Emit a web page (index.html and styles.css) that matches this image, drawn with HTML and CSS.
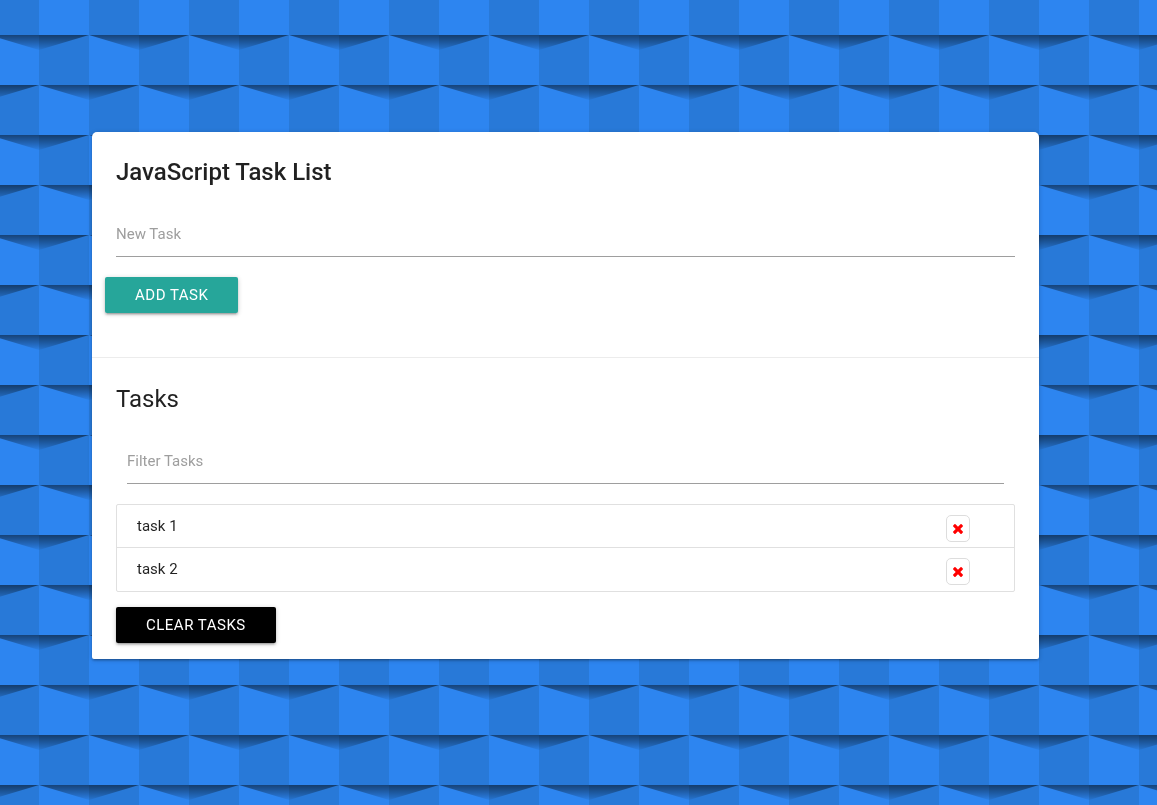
FILE: index.html
```html
<!DOCTYPE html>
<html lang="en">
<head>
<meta charset="utf-8">
<meta name="viewport" content="width=device-width, initial-scale=1">
<title>Task List</title>
<link rel="stylesheet" href="styles.css">
</head>
<body>
<svg class="backdrop" aria-hidden="true">
  <defs>
    <linearGradient id="shade" gradientUnits="userSpaceOnUse" x1="0" y1="0" x2="0" y2="15">
      <stop offset="0" stop-color="#000" stop-opacity=".5"/>
      <stop offset="1" stop-color="#000" stop-opacity="0.04"/>
    </linearGradient>
    <pattern id="blocks" x="-11" y="35" width="100" height="100" patternUnits="userSpaceOnUse">
      <rect width="100" height="100" fill="#2d85f0"/>
      <path d="M50 0H100V50H50ZM0 50H50V100H0Z" fill="#2879d8"/>
      <path d="M0 0H100L50 15Z" fill="url(#shade)"/>
      <g transform="translate(0 50)">
        <path d="M-50 0H50L0 15ZM50 0H150L100 15Z" fill="url(#shade)"/>
      </g>
    </pattern>
  </defs>
  <rect width="100%" height="100%" fill="url(#blocks)"/>
</svg>
<svg class="symbols" aria-hidden="true">
  <symbol id="times" viewBox="302 366 1188 1188">
    <path d="M1490 1322q0 40-28 68l-136 136q-28 28-68 28t-68-28l-294-294-294 294q-28 28-68 28t-68-28l-136-136q-28-28-28-68t28-68l294-294-294-294q-28-28-28-68t28-68l136-136q28-28 68-28t68 28l294 294 294-294q28-28 68-28t68 28l136 136q28 28 28 68t-28 68l-294 294 294 294q28 28 28 68z"/>
  </symbol>
</svg>
<main class="container">
  <div class="card">
    <section class="card-content">
      <h1 class="card-title card-title-main">JavaScript Task List</h1>
      <form class="task-form">
        <input class="field" type="text" id="task" placeholder="New Task" aria-label="New Task">
        <button class="btn btn-add" type="submit">ADD TASK</button>
      </form>
    </section>
    <section class="card-action">
      <h2 class="card-title">Tasks</h2>
      <div class="filter">
        <input class="field" type="text" id="filter" placeholder="Filter Tasks" aria-label="Filter Tasks">
      </div>
      <ul class="collection">
        <li class="collection-item">
          <span>task 1</span>
          <button class="delete-item" type="button" aria-label="Delete task 1"><svg class="icon"><use href="#times"/></svg></button>
        </li>
        <li class="collection-item">
          <span>task 2</span>
          <button class="delete-item" type="button" aria-label="Delete task 2"><svg class="icon"><use href="#times"/></svg></button>
        </li>
      </ul>
      <button class="btn btn-clear" type="button">CLEAR TASKS</button>
    </section>
  </div>
</main>
</body>
</html>
```
FILE: styles.css
```css
* {
  box-sizing: border-box;
}

body {
  margin: 0;
  background: #2879d8;
  color: rgba(0, 0, 0, 0.87);
  font: 15px/22px Roboto, sans-serif;
}

.backdrop {
  position: fixed;
  inset: 0;
  z-index: -1;
  width: 100%;
  height: 100%;
}

.symbols {
  position: absolute;
  width: 0;
  height: 0;
}

.container {
  padding: 132px 118px 24px 92px;
}

.card {
  background: #fff;
  border-radius: 5px 5px 2px 2px;
  box-shadow: 0 2px 2px 0 rgba(0, 0, 0, 0.14), 0 3px 1px -2px rgba(0, 0, 0, 0.12), 0 1px 5px 0 rgba(0, 0, 0, 0.2);
}

.card-content {
  padding: 24px 24px 44px;
}

.card-action {
  padding: 25px 24px 16px;
  border-top: 1px solid rgba(160, 160, 160, 0.2);
}

.card-title {
  margin: 0 0 24px;
  font-size: 24px;
  font-weight: 400;
  line-height: 32px;
}

.card-title-main {
  font-weight: 500;
}

.field {
  display: block;
  width: 100%;
  height: 45px;
  margin-bottom: 20px;
  padding: 0;
  border: 0;
  border-bottom: 1px solid #9e9e9e;
  outline: none;
  background: transparent;
  color: inherit;
  font: inherit;
}

.field::placeholder {
  color: #9e9e9e;
  opacity: 1;
}

.filter {
  padding: 0 11px;
}

.btn {
  display: block;
  height: 36px;
  padding: 0 30px;
  border: 0;
  border-radius: 2px;
  color: #fff;
  font: inherit;
  line-height: 36px;
  letter-spacing: 0.5px;
  box-shadow: 0 2px 2px 0 rgba(0, 0, 0, 0.14), 0 3px 1px -2px rgba(0, 0, 0, 0.12), 0 1px 5px 0 rgba(0, 0, 0, 0.2);
  cursor: pointer;
}

.btn-add {
  margin-left: -11px;
  background: #26a69a;
}

.btn-clear {
  background: #000;
}

.collection {
  margin: 0 0 15px;
  padding: 0;
  border: 1px solid #e0e0e0;
  border-radius: 2px;
  list-style: none;
}

.collection-item {
  display: flex;
  align-items: flex-start;
  justify-content: space-between;
  min-height: 43px;
  padding: 10px 44px 5px 20px;
}

.collection-item:not(:last-child) {
  border-bottom: 1px solid #e0e0e0;
}

.delete-item {
  display: flex;
  align-items: center;
  justify-content: center;
  width: 24px;
  height: 27px;
  padding: 0;
  border: 1px solid #ddd;
  border-radius: 5px;
  background: #fff;
  color: #f00;
  cursor: pointer;
}

.icon {
  width: 10px;
  height: 10px;
  fill: currentColor;
}
```
